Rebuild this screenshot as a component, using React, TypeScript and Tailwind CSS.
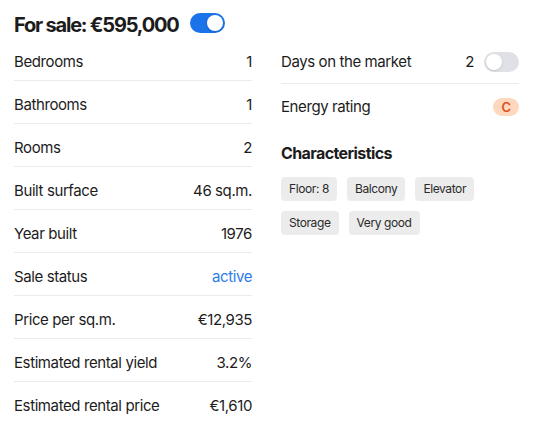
import React from 'react'

const details: { label: string; value: string; accent?: boolean }[] = [
  { label: 'Bedrooms', value: '1' },
  { label: 'Bathrooms', value: '1' },
  { label: 'Rooms', value: '2' },
  { label: 'Built surface', value: '46 sq.m.' },
  { label: 'Year built', value: '1976' },
  { label: 'Sale status', value: 'active', accent: true },
  { label: 'Price per sq.m.', value: '€12,935' },
  { label: 'Estimated rental yield', value: '3.2%' },
  { label: 'Estimated rental price', value: '€1,610' },
]

const characteristics = ['Floor: 8', 'Balcony', 'Elevator', 'Storage', 'Very good']

function Toggle({ on }: { on: boolean }) {
  return (
    <span
      className={`flex h-[20px] w-[35px] items-center rounded-full p-[2px] ${
        on ? 'justify-end bg-[#1a73e8]' : 'justify-start bg-[#dfe1e7]'
      }`}
    >
      <span className="h-[16px] w-[16px] rounded-full bg-white shadow-sm" />
    </span>
  )
}

export default function App() {
  return (
    <div className="min-h-screen bg-white pl-[14px] pr-[16px] text-[#1c1c1c] [font-family:Inter,'Noto_Sans',sans-serif]">
      <div className="grid grid-cols-2 gap-x-[29px]">
        {/* Left column */}
        <div>
          <div className="flex h-[38px] items-center gap-[11px] pt-[10px] pb-[2px]">
            <h1 className="mt-[4px] text-[20px] font-bold leading-[26px] tracking-[-1.2px]">For sale: €595,000</h1>
            <Toggle on />
          </div>
          {details.map((d, i) => (
            <div
              key={d.label}
              className={`flex items-center justify-between pt-[13px] pb-[7px] text-[15px] leading-[22px] tracking-[-0.4px] ${
                i < details.length - 1 ? 'border-b border-[#ebebeb]' : ''
              }`}
            >
              <span>{d.label}</span>
              <span className={d.accent ? 'text-[#2b7de9]' : ''}>{d.value}</span>
            </div>
          ))}
        </div>

        {/* Right column */}
        <div className="pt-[38px]">
          <div className="flex items-center justify-between border-b border-[#ebebeb] pt-[13px] pb-[10px] text-[15px] leading-[22px] tracking-[-0.4px]">
            <span>Days on the market</span>
            <div className="flex items-center gap-[10px]">
              <span>2</span>
              <Toggle on={false} />
            </div>
          </div>
          <div className="flex items-center justify-between pt-[12px] pb-[9px] text-[15px] leading-[22px] tracking-[-0.4px]">
            <span>Energy rating</span>
            <span className="flex h-[18px] w-[26px] items-center justify-center rounded-full bg-[#fdd8bf] text-[13px] font-semibold text-[#d9531e]">
              C
            </span>
          </div>
          <h2 className="mt-[15px] text-[16px] font-bold leading-[22px] tracking-[-0.6px]">Characteristics</h2>
          <div className="mt-[13px] flex flex-wrap gap-x-[10px] gap-y-[10px]">
            {characteristics.map((c) => (
              <span
                key={c}
                className="flex h-[24px] items-center rounded-[4px] bg-[#ececec] px-[8px] text-[12px] tracking-[-0.4px] text-[#2a2a2a]"
              >
                {c}
              </span>
            ))}
          </div>
        </div>
      </div>
    </div>
  )
}
